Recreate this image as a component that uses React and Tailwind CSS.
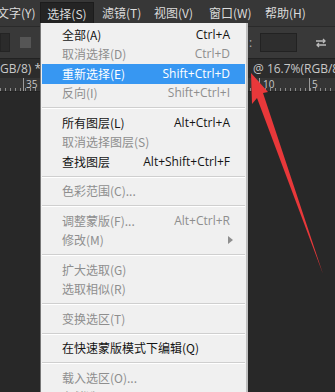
// Photoshop "选择" menu, opened over the dark workspace
import React from 'react';

const cjk = { fontFamily: '"Noto Sans CJK SC", "Noto Sans", sans-serif' };
const latin = { fontFamily: '"Open Sans", "Noto Sans", sans-serif' };

// menu entries: sep = separator line
const items = [
  { label: '全部(A)', key: 'Ctrl+A' },
  { label: '取消选择(D)', key: 'Ctrl+D', off: true },
  { label: '重新选择(E)', key: 'Shift+Ctrl+D', active: true },
  { label: '反向(I)', key: 'Shift+Ctrl+I', off: true },
  { sep: true },
  { label: '所有图层(L)', key: 'Alt+Ctrl+A' },
  { label: '取消选择图层(S)', off: true },
  { label: '查找图层', key: 'Alt+Shift+Ctrl+F' },
  { sep: true },
  { label: '色彩范围(C)...', off: true },
  { sep: true },
  { label: '调整蒙版(F)...', key: 'Alt+Ctrl+R', off: true },
  { label: '修改(M)', off: true, sub: true },
  { sep: true },
  { label: '扩大选取(G)', off: true },
  { label: '选取相似(R)', off: true },
  { sep: true },
  { label: '变换选区(T)', off: true },
  { sep: true },
  { label: '在快速蒙版模式下编辑(Q)' },
  { sep: true },
  { label: '载入选区(O)...', off: true },
  { label: '存储选区(V)...', off: true },
];

const MenuRow = ({ item }) => {
  if (item.sep) {
    return (
      <div className="h-[10px] flex flex-col justify-center px-[1px]">
        <div className="h-px bg-[#cfcfcf]" />
        <div className="h-px bg-white" />
      </div>
    );
  }
  const color = item.active ? 'text-white' : item.off ? 'text-[#8e8e8e]' : 'text-[#141414]';
  return (
    <div
      className={`h-[19.5px] mx-[1px] flex items-center pl-[20px] pr-[15px] text-[12px] whitespace-nowrap ${color} ${
        item.active ? 'bg-[#3797f2]' : ''
      }`}
    >
      <span style={cjk} className="leading-none">{item.label}</span>
      <span className="flex-1" />
      {item.key && (
        <span style={latin} className="leading-none">{item.key}</span>
      )}
      {item.sub && (
        <svg width="5" height="8" viewBox="0 0 5 8" className="-mr-[3px]">
          <path d="M0 0 L5 4 L0 8 Z" fill="#8e8e8e" />
        </svg>
      )}
    </div>
  );
};

const App = () => {
  return (
    <div className="relative w-[335px] h-[392px] overflow-hidden bg-[#282828] flex flex-col">
      {/* Menu bar */}
      <div style={cjk} className="h-[26px] bg-[#373737] flex items-center text-[12px] text-[#dcdcdc] shrink-0 whitespace-nowrap">
        <div className="w-[40px] shrink-0 -ml-[3px]">文字(Y)</div>
        <div className="w-[54px] h-[24px] mt-[2px] ml-[3px] shrink-0 bg-[#242424] border border-[#1c1c1c] flex items-center justify-center">
          选择(S)
        </div>
        <div className="ml-[8px] w-[52px] shrink-0">滤镜(T)</div>
        <div className="w-[55px] shrink-0">视图(V)</div>
        <div className="w-[56px] shrink-0">窗口(W)</div>
        <div className="shrink-0">帮助(H)</div>
      </div>

      {/* Options bar */}
      <div className="h-[32px] bg-[#393939] border-t border-[#2a2a2a] flex items-center shrink-0">
        <div className="w-[10px] h-[19px] bg-[#2b2b2b] border border-[#242424]" />
        <div className="ml-[10px] w-[11px] h-[11px] bg-[#555]" />
        <div className="ml-[218px] text-[12px] text-[#aaa]" style={latin}>:</div>
        <div className="ml-[8px] w-[37px] h-[19px] bg-[#2e2e2e] border border-[#222]" />
        <svg className="ml-[18px]" width="12" height="12" viewBox="0 0 12 12" fill="none" stroke="#bbb" strokeWidth="1.3">
          <path d="M1 4h9M8 2l2 2-2 2M11 8H2M4 6l-2 2 2 2" />
        </svg>
      </div>

      {/* Document tab */}
      <div style={latin} className="h-[20px] bg-[#2c2c2c] border-t border-[#222] flex items-center text-[12px] text-[#c8c8c8] shrink-0 whitespace-nowrap">
        <span className="w-[40px] shrink-0">GB/8) *</span>
        <span className="ml-[213px] shrink-0">@ 16.7%(RGB/8</span>
      </div>

      {/* Ruler */}
      <div style={latin} className="relative h-[14px] bg-[#353535] text-[10px] text-[#c8c8c8] shrink-0 border-b border-[#222]">
        <div
          className="absolute inset-x-0 bottom-0 h-[3px]"
          style={{ backgroundImage: 'repeating-linear-gradient(90deg, #8a8a8a 0 1px, transparent 1px 5px)' }}
        />
        <div className="absolute left-[23px] top-0 w-px h-full bg-[#9a9a9a]" />
        <span className="absolute left-[26px] top-[1px] leading-none">35</span>
        <div className="absolute left-[259px] top-0 w-px h-full bg-[#9a9a9a]" />
        <span className="absolute left-[263px] top-[1px] leading-none">10</span>
        <div className="absolute left-[309px] top-0 w-px h-full bg-[#9a9a9a]" />
        <span className="absolute left-[312px] top-[1px] leading-none">5</span>
      </div>

      {/* Canvas */}
      <div className="flex-1 bg-[#282828]" />

      {/* Dropdown */}
      <div className="absolute left-[40px] top-[23px] w-[208px] h-[380px] bg-[#f0f0f0] border-l border-[#777] border-r-2 border-r-[#bdbdbd] pt-[2px]">
        {items.map((item, i) => (
          <MenuRow key={i} item={item} />
        ))}
      </div>

      {/* Red annotation arrow */}
      <svg className="absolute inset-0 pointer-events-none" width="335" height="392" viewBox="0 0 335 392">
        <polygon points="251,73 268,92 263,93 323,274 257,98 252,104" fill="#e8383a" />
      </svg>
    </div>
  );
};

export default App;
